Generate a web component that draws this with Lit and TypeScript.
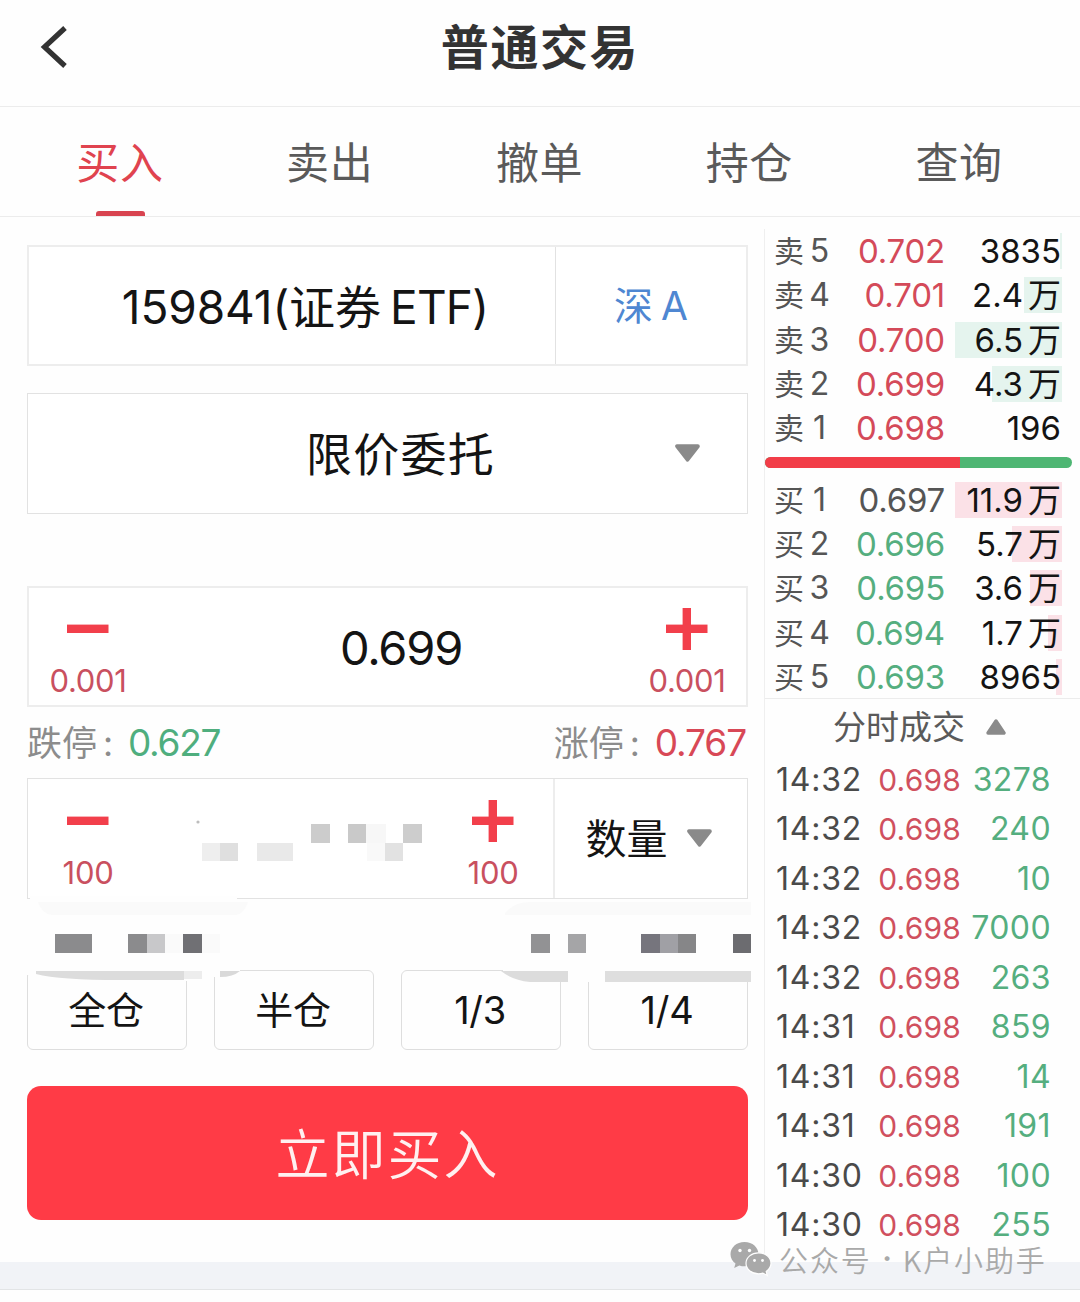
import { LitElement, html, svg, css } from "lit";
import { customElement, property } from "lit/decorators.js";
import { classMap } from "lit/directives/class-map.js";

type Level = { name: string; price: string; qty: string; tone: string; depth: number };
type Trade = { time: string; price: string; qty: string };

const TABS = ["买入", "卖出", "撤单", "持仓", "查询"];

const SELLS: Level[] = [
  { name: "卖5", price: "0.702", qty: "3835", tone: "up", depth: 2 },
  { name: "卖4", price: "0.701", qty: "2.4万", tone: "up", depth: 38 },
  { name: "卖3", price: "0.700", qty: "6.5万", tone: "up", depth: 107 },
  { name: "卖2", price: "0.699", qty: "4.3万", tone: "up", depth: 70 },
  { name: "卖1", price: "0.698", qty: "196", tone: "up", depth: 0 },
];

const BUYS: Level[] = [
  { name: "买1", price: "0.697", qty: "11.9万", tone: "flat", depth: 107 },
  { name: "买2", price: "0.696", qty: "5.7万", tone: "down", depth: 50 },
  { name: "买3", price: "0.695", qty: "3.6万", tone: "down", depth: 32 },
  { name: "买4", price: "0.694", qty: "1.7万", tone: "down", depth: 14 },
  { name: "买5", price: "0.693", qty: "8965", tone: "down", depth: 6 },
];

const TRADES: Trade[] = [
  ["14:32", "3278"], ["14:32", "240"], ["14:32", "10"], ["14:32", "7000"], ["14:32", "263"],
  ["14:31", "859"], ["14:31", "14"], ["14:31", "191"], ["14:30", "100"], ["14:30", "255"],
].map(([time, qty]) => ({ time, price: "0.698", qty }));

/* x, y, width, height, fill */
const BLOCKS: [number, number, number, number, string][] = [
  [202, 843, 18, 18, "#eeeeee"], [220, 843, 18, 18, "#dfdfdf"], [257, 843, 36, 18, "#e9e9e9"],
  [311, 824, 19, 19, "#cccccc"], [348, 824, 18, 19, "#c9c9c9"], [366, 824, 20, 19, "#f7f7f7"],
  [367, 843, 18, 18, "#f9f9f9"], [385, 843, 18, 18, "#e2e2e2"], [403, 824, 19, 19, "#cdcdcd"],
  [55, 934, 37, 19, "#8b8b8d"], [128, 934, 19, 19, "#8b8b8d"], [147, 934, 18, 19, "#c8c8ca"],
  [165, 934, 18, 19, "#fafafa"], [183, 934, 19, 19, "#707074"], [202, 934, 18, 19, "#fafafa"],
  [531, 934, 19, 19, "#929294"], [568, 934, 18, 19, "#a5a5a7"], [641, 934, 19, 19, "#76757d"],
  [660, 934, 18, 19, "#a0a0a5"], [678, 934, 18, 19, "#868688"], [733, 934, 18, 19, "#6c6c70"],
];

@customElement("caret-icon")
class CaretIcon extends LitElement {
  @property({ type: Boolean }) up = false;
  static styles = css`
    :host { display: block; }
    svg { display: block; }
  `;
  render() {
    return this.up
      ? html`<svg width="20" height="16" viewBox="0 0 20 16"><path d="M10 2L18 14H2Z" fill="#8a8a8a" stroke="#8a8a8a" stroke-width="3.4" stroke-linejoin="round"/></svg>`
      : html`<svg width="25" height="18" viewBox="0 0 25 18"><path d="M2.2 2.2H22.8L12.5 15.6Z" fill="#8a8a8a" stroke="#8a8a8a" stroke-width="4" stroke-linejoin="round"/></svg>`;
  }
}

@customElement("step-button")
class StepButton extends LitElement {
  @property() kind = "minus";
  @property() step = "";
  static styles = css`
    :host { display: flex; flex-direction: column; align-items: center; width: 90px; color: #c9505f; }
    svg { display: block; margin-top: 19.5px; }
    .step { font-size: 31px; line-height: 40px; letter-spacing: -0.3px; margin-top: 11px; }
  `;
  render() {
    return html`
      <svg width="42" height="42" viewBox="0 0 42 42" fill="#f23f4b">
        <rect x="0" y="16.600" width="41.500" height="8.4" />
        ${this.kind === "plus" ? svg`<rect x="16.600" y="0" width="8.4" height="42" />` : ""}
      </svg>
      <span class="step">${this.step}</span>
    `;
  }
}

@customElement("order-level")
class OrderLevel extends LitElement {
  @property({ attribute: false }) level!: Level;
  @property() side = "sell";
  static styles = css`
    :host { display: flex; align-items: center; height: 44.25px; padding: 0 19px 0 9px; font-size: 33px; line-height: 44px; }
    .name { width: 56px; color: #555; font-size: 32px; display: grid; grid-template-columns: 35px 1fr; }
    .name .cjk { font-size: 30px; }
    .name .n { justify-self: center; }
    .price { width: 115px; margin-right: 1px; text-align: right; letter-spacing: -0.2px; }
    .up { color: #d44a59; }
    .down { color: #55ae7f; }
    .flat { color: #555; }
    .qty { flex: 1; display: flex; align-items: center; justify-content: flex-end; position: relative; color: #141414; letter-spacing: 0; }
    .depth { position: absolute; right: -1px; top: 4px; height: 36px; background: #e5f4ee; }
    .buy .depth { background: #fbe1e7; }
    .value { position: relative; display: flex; gap: 5px; }
    .unit { font-size: 33px; letter-spacing: 0; }
  `;
  render() {
    const { name, price, qty, tone, depth } = this.level;
    const wan = qty.endsWith("万");
    return html`
      <span class="name"><span class="cjk">${name[0]}</span><span class="n">${name[1]}</span></span>
      <span class=${classMap({ price: true, [tone]: true })}>${price}</span>
      <span class=${classMap({ qty: true, [this.side]: true })}>
        <span class="depth" style="width:${depth}px"></span>
        <span class="value"><span>${wan ? qty.slice(0, -1) : qty}</span>${wan ? html`<span class="unit">万</span>` : ""}</span>
      </span>
    `;
  }
}

@customElement("app-root")
class AppRoot extends LitElement {
  static styles = css`
    :host {
      display: flex; flex-direction: column; position: relative;
      width: 1080px; height: 1302px; overflow: hidden; background: #fefefe; color: #141414;
      font-family: Inter, "Noto Sans CJK SC", sans-serif;
    }
    * { box-sizing: border-box; }
    header { display: grid; grid-template-columns: 120px 1fr 120px; align-items: center; height: 107px; padding-bottom: 13px; border-bottom: 1px solid #ececec; }
    .back { margin-left: 40px; display: block; }
    h1 { margin: 0; text-align: center; font-size: 48px; line-height: 60px; font-weight: 700; letter-spacing: 1.6px; color: #333; padding-top: 2px; }
    nav { display: flex; height: 110px; padding: 0 16px 0 15px; border-bottom: 1px solid #ececec; }
    .tab { flex: 1; display: flex; flex-direction: column; justify-content: space-between; align-items: center; padding-top: 26px; font-size: 43px; line-height: 60px; letter-spacing: 0.6px; color: #5a5a5a; }
    .tab.on { color: #e0434f; }
    .mark { width: 49px; height: 5px; margin-left: 2px; border-radius: 3px 3px 0 0; background: #d84450; }
    main { display: flex; height: 1045px; }
    .form { position: relative; width: 764px; padding: 28px 16px 0 27px; }
    .box { display: flex; height: 121px; border: 2px solid #ededed; background: #fff; line-height: 60px; }
    .code { width: 527px; display: flex; align-items: center; justify-content: center; font-size: 46px; padding: 2px 0 0 26px; border-right: 1px solid #e2e2e2; }
    .code .digits { letter-spacing: -0.1px; }
    .code .etf { letter-spacing: -0.8px; margin-left: 9px; }
    .market { flex: 1; display: flex; align-items: center; justify-content: center; gap: 8px; font-size: 39px; color: #4f87d2; }
    .type { margin-top: 27px; align-items: center; padding: 0 47px 2px 0; border-width: 1px; border-color: #e2e2e2; }
    .type .label { flex: 1; text-align: center; padding: 3px 0 0 98px; font-size: 46px; letter-spacing: 1.2px; }
    .type caret-icon { margin-top: 1px; }
    .price { margin-top: 72px; justify-content: space-between; padding: 0 14px; }
    .price .value { align-self: center; font-size: 47px; padding: 2px 0 0 27px; letter-spacing: -1.2px; }
    .limits { display: flex; justify-content: space-between; align-items: center; height: 71px; color: #8c8c8c; font-size: 35px; line-height: 50px; padding: 1px 2px 0 0; }
    .limits span { display: flex; align-items: center; }
    .limits b { font-weight: 400; font-size: 37px; letter-spacing: -1.3px; }
    .limits .colon { width: 31px; padding-left: 6px; }
    .limits .low { color: #4fae7e; }
    .limits .high { color: #d84856; letter-spacing: -1.1px; }
    .amount { border-width: 1px; border-color: #e2e2e2; }
    .amount .steps { width: 527px; display: flex; justify-content: space-between; padding: 1px 15px 0 15px; border-right: 2px solid #ededed; }
    .amount .unit { flex: 1; display: flex; align-items: center; justify-content: center; gap: 19px; font-size: 41px; padding: 0 5px 1px 0; }
    .amount .unit span { padding-top: 2px; }
    .quick { margin-top: 71px; display: grid; grid-template-columns: repeat(4, 1fr); gap: 27px; }
    .quick div { height: 80px; border: 1px solid #dedede; border-radius: 6px; display: flex; align-items: center; justify-content: center; font-size: 38px; line-height: 50px; padding: 0 2px 0 0; letter-spacing: -0.3px; }
    .submit { margin-top: 36px; height: 134px; border-radius: 14px; background: #ff3b46; color: #fff0f0; display: flex; align-items: center; justify-content: center; font-size: 54px; line-height: 70px; font-weight: 350; letter-spacing: 2px; padding-top: 5px; }
    .mosaic { position: absolute; left: 0; top: 561px; }
    .book { width: 316px; border-left: 1px solid #efefef; margin-top: 12px; }
    .ratio { display: flex; height: 11px; width: 307px; margin: 7px 0 9.5px; border-radius: 6px; overflow: hidden; background: #4eb673; }
    .ratio .r { width: 195px; background: #f23d48; }
    .deals { display: flex; align-items: center; margin-top: -1px; height: 57px; border-top: 1px solid #ececec; padding-left: 68px; gap: 21px; font-size: 33px; line-height: 44px; color: #5a5a5a; }
    .trade { display: grid; grid-template-columns: 96px 89px 1fr; align-items: center; height: 49.5px; padding: 0 29px 0 11px; font-size: 32px; line-height: 32px; }
    .trade .t { color: #4a4a4a; letter-spacing: 0.8px; }
    .trade .p { color: #d0505e; font-size: 30px; text-align: right; letter-spacing: 0.2px; }
    .trade .q { color: #55ae7f; text-align: right; letter-spacing: 0.4px; }
    .band { height: 28px; background: #f1f3f7; border-bottom: 1px solid #e2e4e6; }
    .brand { position: absolute; left: 730px; top: 1240px; display: flex; align-items: center; height: 38px; font-size: 29px; line-height: 32px; letter-spacing: 1.9px; color: #a9a9a9; font-family: "Noto Sans CJK SC", sans-serif; font-weight: 350; }
    .brand svg { margin-right: 7px; }
    .brand .dot { width: 31px; text-align: center; font-family: Inter, sans-serif; font-weight: 700; letter-spacing: 0; }
  `;

  render() {
    return html`
      <header>
        <svg class="back" width="28" height="44" viewBox="0 0 28 44" fill="none" stroke="#333" stroke-width="5.2"><path d="M25 3L4.500 22L25 41" /></svg>
        <h1>普通交易</h1>
      </header>
      <nav>
        ${TABS.map((t, i) => html`<div class=${classMap({ tab: true, on: i === 0 })}><span>${t}</span>${i === 0 ? html`<i class="mark"></i>` : ""}</div>`)}
      </nav>
      <main>
        <section class="form">
          <div class="box">
            <div class="code"><span class="digits">159841(</span><span>证券</span><span class="etf">ETF)</span></div>
            <div class="market"><span>深</span><span>A</span></div>
          </div>
          <div class="box type"><span class="label">限价委托</span><caret-icon></caret-icon></div>
          <div class="box price">
            <step-button kind="minus" step="0.001"></step-button>
            <span class="value">0.699</span>
            <step-button kind="plus" step="0.001"></step-button>
          </div>
          <div class="limits">
            <span>跌停<span class="colon">:</span><b class="low">0.627</b></span>
            <span>涨停<span class="colon">:</span><b class="high">0.767</b></span>
          </div>
          <div class="box amount">
            <div class="steps">
              <step-button kind="minus" step="100"></step-button>
              <step-button kind="plus" step="100"></step-button>
            </div>
            <div class="unit"><span>数量</span><caret-icon></caret-icon></div>
          </div>
          <div class="quick"><div>全仓</div><div>半仓</div><div>1/3</div><div>1/4</div></div>
          <div class="submit">立即买入</div>
          <svg class="mosaic" width="764" height="284" viewBox="0 778 764 284">
            <rect x="30" y="896" width="207" height="5" fill="#fefefe" />
            <path d="M38 902H248Q244 914 236 915H52Q42 914 38 902Z" fill="#fafafa" />
            <path d="M505 913Q514 902 530 902H751V915H505Z" fill="#fafafa" />
            <path d="M26 966H240V971H220V977H202V981H36V975H26Z" fill="#fefefe" />
            <path d="M36 971H184V980H120Q60 980 36 974Z" fill="#dcdcdc" />
            <rect x="184" y="971" width="18" height="8" fill="#ededed" />
            <path d="M220 971H240Q233 977 220 977Z" fill="#d9d9d9" />
            <rect x="568" y="966" width="36" height="16" fill="#fefefe" />
            <rect x="503" y="966" width="248" height="5" fill="#fefefe" />
            <path d="M501 971H568V982H530Q512 980 501 971Z" fill="#dcdcdc" />
            <rect x="605" y="971" width="146" height="11" fill="#dedede" />
            <circle cx="198" cy="822" r="1.6" fill="#bdbdbd" />
            ${BLOCKS.map(([x, y, w, h, f]) => svg`<rect x=${x} y=${y} width=${w} height=${h} fill=${f} />`)}
          </svg>
        </section>
        <aside class="book">
          ${SELLS.map((l) => html`<order-level .level=${l} side="sell"></order-level>`)}
          <div class="ratio"><i class="r"></i></div>
          ${BUYS.map((l) => html`<order-level .level=${l} side="buy"></order-level>`)}
          <div class="deals"><span>分时成交</span><caret-icon up></caret-icon></div>
          ${TRADES.map((t) => html`<div class="trade"><span class="t">${t.time}</span><span class="p">${t.price}</span><span class="q">${t.qty}</span></div>`)}
        </aside>
      </main>
      <div class="band"></div>
      <div class="brand">
        <svg width="42" height="36" viewBox="0 0 42 36">
          <path d="M14.5 1C6.500 1 0.500 6.500 0.500 13.200C0.500 17 2.400 20.300 5.500 22.500L4.200 27L9.300 24.400C11 25 12.700 25.300 14.500 25.300C22.500 25.300 28.500 19.900 28.500 13.200C28.500 6.500 22.500 1 14.500 1Z" fill="#a9a9a9" />
          <path d="M28.500 11.800C21.500 11.800 16 16.500 16 22.300C16 28.200 21.500 32.800 28.500 32.800C30 32.800 31.500 32.600 32.900 32.100L37.300 34.600L36.200 30.600C39 28.600 41 25.700 41 22.300C41 16.500 35.500 11.800 28.500 11.800Z" fill="#a9a9a9" stroke="#fefefe" stroke-width="1.2" />
          <circle cx="10" cy="9.500" r="1.700" fill="#fefefe" /><circle cx="19.500" cy="9.500" r="1.700" fill="#fefefe" />
          <circle cx="24.500" cy="19.500" r="1.400" fill="#fefefe" /><circle cx="32.500" cy="19.500" r="1.400" fill="#fefefe" />
        </svg>
        <span>公众号</span><span class="dot">·</span><span>K户小助手</span>
      </div>
    `;
  }
}
